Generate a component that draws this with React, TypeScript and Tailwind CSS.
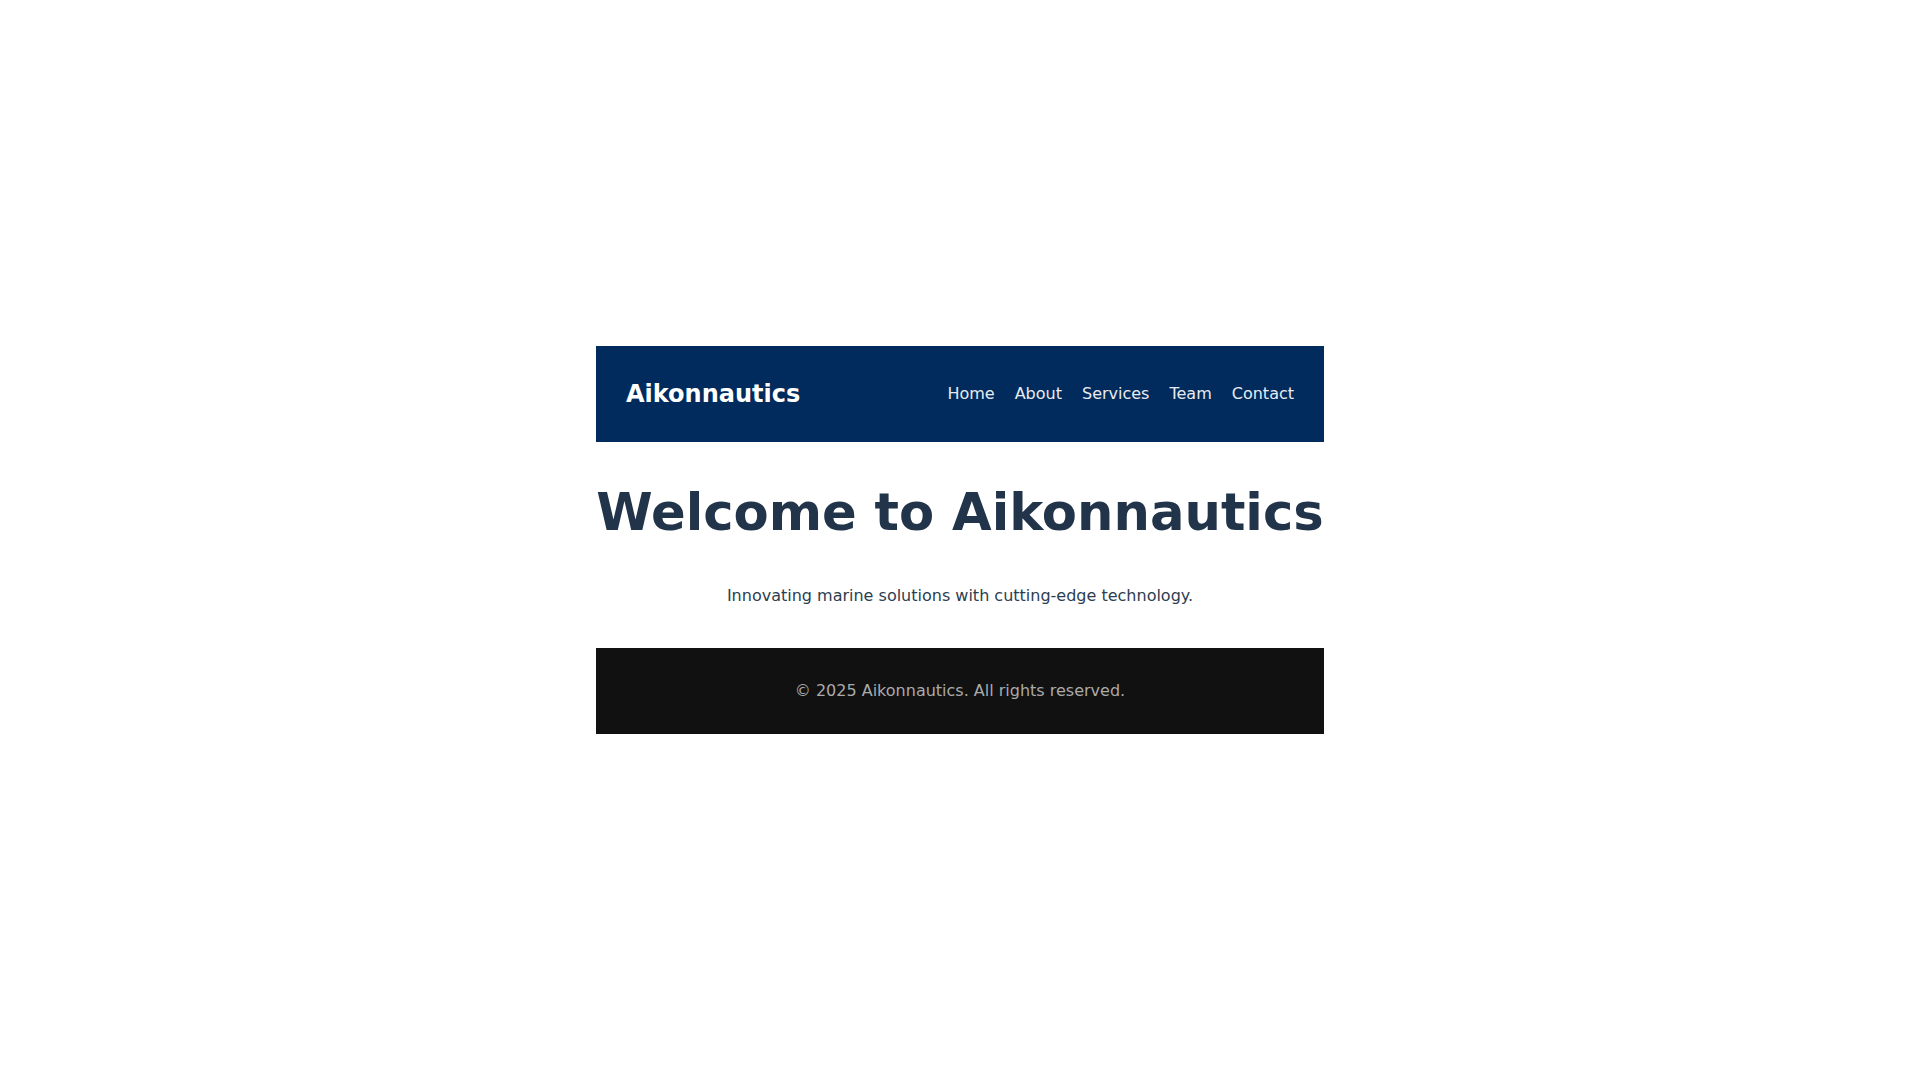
export default function App() {
  const links = ["Home", "About", "Services", "Team", "Contact"];

  return (
    <div className="min-h-screen flex items-center justify-center bg-white font-['DejaVu_Sans',sans-serif]">
      <div className="w-[728px] flex flex-col">
        {/* Header */}
        <header className="bg-[#002b5c] px-[30px] py-[30px] flex items-center justify-between">
          <span className="text-white text-[24px] leading-[36px] font-bold">Aikonnautics</span>
          <nav className="flex items-center gap-5">
            {links.map((l) => (
              <a key={l} href="#" className="text-[#e8ebf1] text-[16px] leading-[24px]">
                {l}
              </a>
            ))}
          </nav>
        </header>

        {/* Hero */}
        <h1 className="mt-[40px] text-center text-[#22344a] text-[51.2px] leading-[60px] font-bold whitespace-nowrap">
          Welcome to Aikonnautics
        </h1>
        <p className="mt-[42px] text-center text-[#2c3e50] text-[16px] leading-[24px]">
          Innovating marine solutions with cutting-edge technology.
        </p>

        {/* Footer */}
        <footer className="mt-[40px] bg-[#111111] py-[31px] text-center text-[#aaaaaa] text-[16px] leading-[24px]">
          © 2025 Aikonnautics. All rights reserved.
        </footer>
      </div>
    </div>
  );
}
